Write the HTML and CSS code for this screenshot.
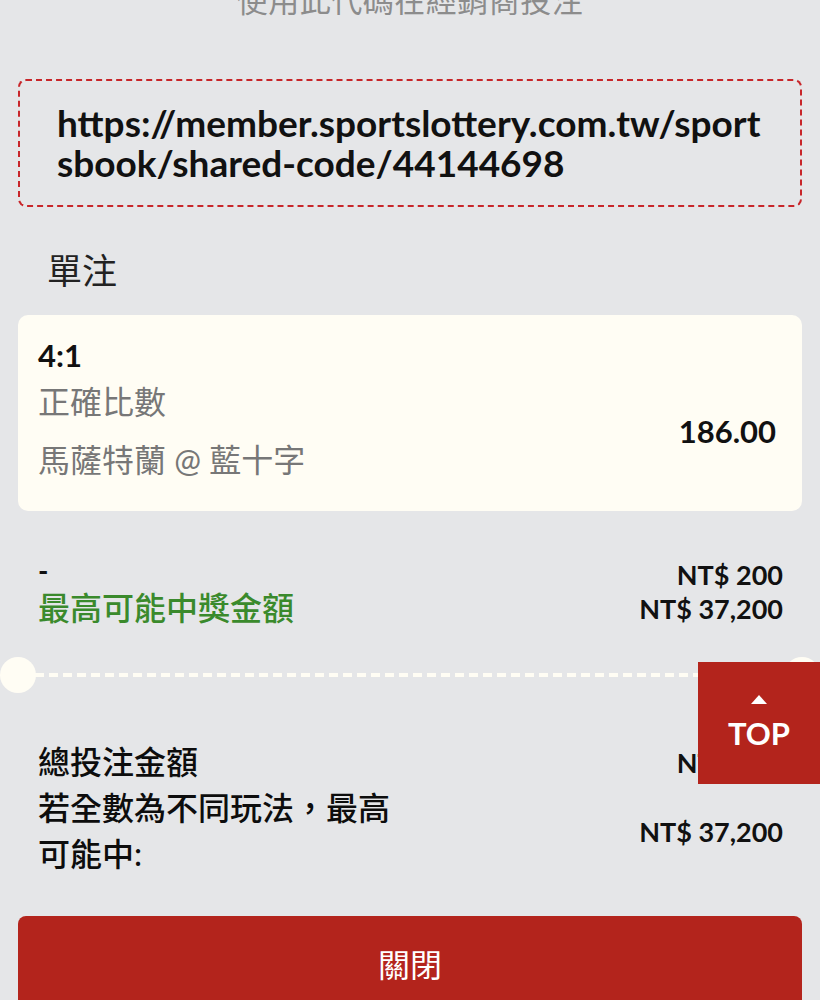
FILE: index.html
```html
<!DOCTYPE html>
<html lang="zh-Hant">
<head>
    <meta charset="UTF-8">
    <meta name="viewport" content="width=device-width, initial-scale=1.0">
    <title>分享投注</title>
    <link rel="stylesheet" href="styles.css">
</head>
<body>
    <div class="sheet">
        <p class="hint">使用此代碼在經銷商投注</p>

        <div class="share-link">https://member.sportslottery.com.tw/sportsbook/shared-code/44144698</div>

        <h2 class="bet-type">單注</h2>

        <div class="bet-card">
            <div class="bet-info">
                <div class="bet-pick">4:1</div>
                <div class="bet-market">正確比數</div>
                <div class="bet-match">馬薩特蘭 @ 藍十字</div>
            </div>
            <div class="bet-odds">186.00</div>
        </div>

        <div class="stake-row">
            <div class="stake-labels">
                <div class="stake-dash">-</div>
                <div class="stake-win">最高可能中獎金額</div>
            </div>
            <div class="stake-values">
                <div>NT$ 200</div>
                <div>NT$ 37,200</div>
            </div>
        </div>
    </div>

    <div class="ticket-divider">
        <span class="notch"></span>
        <span class="dash-line"></span>
        <span class="notch"></span>
    </div>

    <div class="sheet">
        <div class="total-row total-row-first">
            <div class="total-label">總投注金額</div>
            <div class="total-value">NT$ 200</div>
        </div>
        <div class="total-row">
            <div class="total-label">若全數為不同玩法，最高<br>可能中:</div>
            <div class="total-value">NT$ 37,200</div>
        </div>

        <button class="close-button">關閉</button>
    </div>

    <a class="top-button" href="#">
        <span class="top-arrow"></span>
        TOP
    </a>
</body>
</html>
```

FILE: styles.css
```css
body {
    margin: 0;
    padding: 0;
    background-color: #e5e6e8;
    font-family: "Lato", "Noto Sans CJK TC", sans-serif;
    color: #111;
    overflow: hidden;
}
.sheet {
    padding: 0 18px;
}
.hint {
    margin: -20px 0 0;
    text-align: center;
    font-size: 31px;
    line-height: 40px;
    color: #8c8c8c;
    letter-spacing: 0.5px;
}
.share-link {
    margin-top: 59px;
    padding: 22px 34px 22px 37px;
    border: 2px dashed #c8262a;
    border-radius: 8px;
    font-size: 37px;
    font-weight: bold;
    line-height: 40px;
    word-break: break-all;
    color: #111;
}
.bet-type {
    margin: 40px 0 0 29px;
    font-size: 35px;
    font-weight: normal;
    line-height: 46px;
    color: #222;
}
.bet-card {
    display: flex;
    align-items: center;
    justify-content: space-between;
    margin-top: 22px;
    padding: 18px 26px 26px 20px;
    background-color: #fffdf4;
    border-radius: 10px;
}
.bet-pick {
    font-size: 31px;
    font-weight: bold;
    line-height: 44px;
}
.bet-market,
.bet-match {
    font-size: 32px;
    line-height: 50px;
    color: #777;
}
.bet-match {
    margin-top: 8px;
}
.bet-odds {
    margin-top: 44px;
    font-size: 31px;
    font-weight: bold;
}
.stake-row {
    display: flex;
    justify-content: space-between;
    align-items: flex-end;
    margin-top: 42px;
    padding: 0 19px 0 20px;
}
.stake-dash {
    font-size: 28px;
    line-height: 34px;
    font-weight: bold;
}
.stake-win {
    font-size: 32px;
    line-height: 42px;
    font-weight: 500;
    color: #3a8a2c;
}
.stake-values {
    text-align: right;
    font-size: 27px;
    font-weight: bold;
    line-height: 34px;
    padding-bottom: 3px;
}
.ticket-divider {
    display: flex;
    align-items: center;
    margin-top: 28px;
}
.notch {
    flex: none;
    width: 36px;
    height: 36px;
    border-radius: 50%;
    background-color: #fffdf4;
}
.dash-line {
    flex: 1;
    height: 4px;
    margin: 0 -1px;
    background-image: linear-gradient(to right, #fffdf4 0 9px, transparent 9px 14px);
    background-size: 14px 4px;
}
.total-row {
    display: flex;
    justify-content: space-between;
    align-items: center;
    padding: 0 19px 0 20px;
}
.total-row-first {
    margin-top: 46px;
}
.total-label {
    font-size: 32px;
    line-height: 46px;
    font-weight: 500;
    color: #0d0d0d;
}
.total-value {
    font-size: 27px;
    font-weight: bold;
}
.close-button {
    display: block;
    width: 100%;
    margin-top: 39px;
    height: 94px;
    padding: 0;
    border: none;
    border-radius: 8px;
    background-color: #b3241c;
    color: #fff;
    font-family: "Lato", "Noto Sans CJK TC", sans-serif;
    font-size: 32px;
}
.top-button {
    position: fixed;
    top: 662px;
    right: 0;
    width: 122px;
    height: 122px;
    display: flex;
    flex-direction: column;
    align-items: center;
    justify-content: center;
    background-color: #b3241c;
    color: #fff;
    text-decoration: none;
    font-size: 31px;
    font-weight: bold;
}
.top-arrow {
    width: 0;
    height: 0;
    border-left: 8px solid transparent;
    border-right: 8px solid transparent;
    border-bottom: 9px solid #fff;
    margin-bottom: 10px;
}
```
